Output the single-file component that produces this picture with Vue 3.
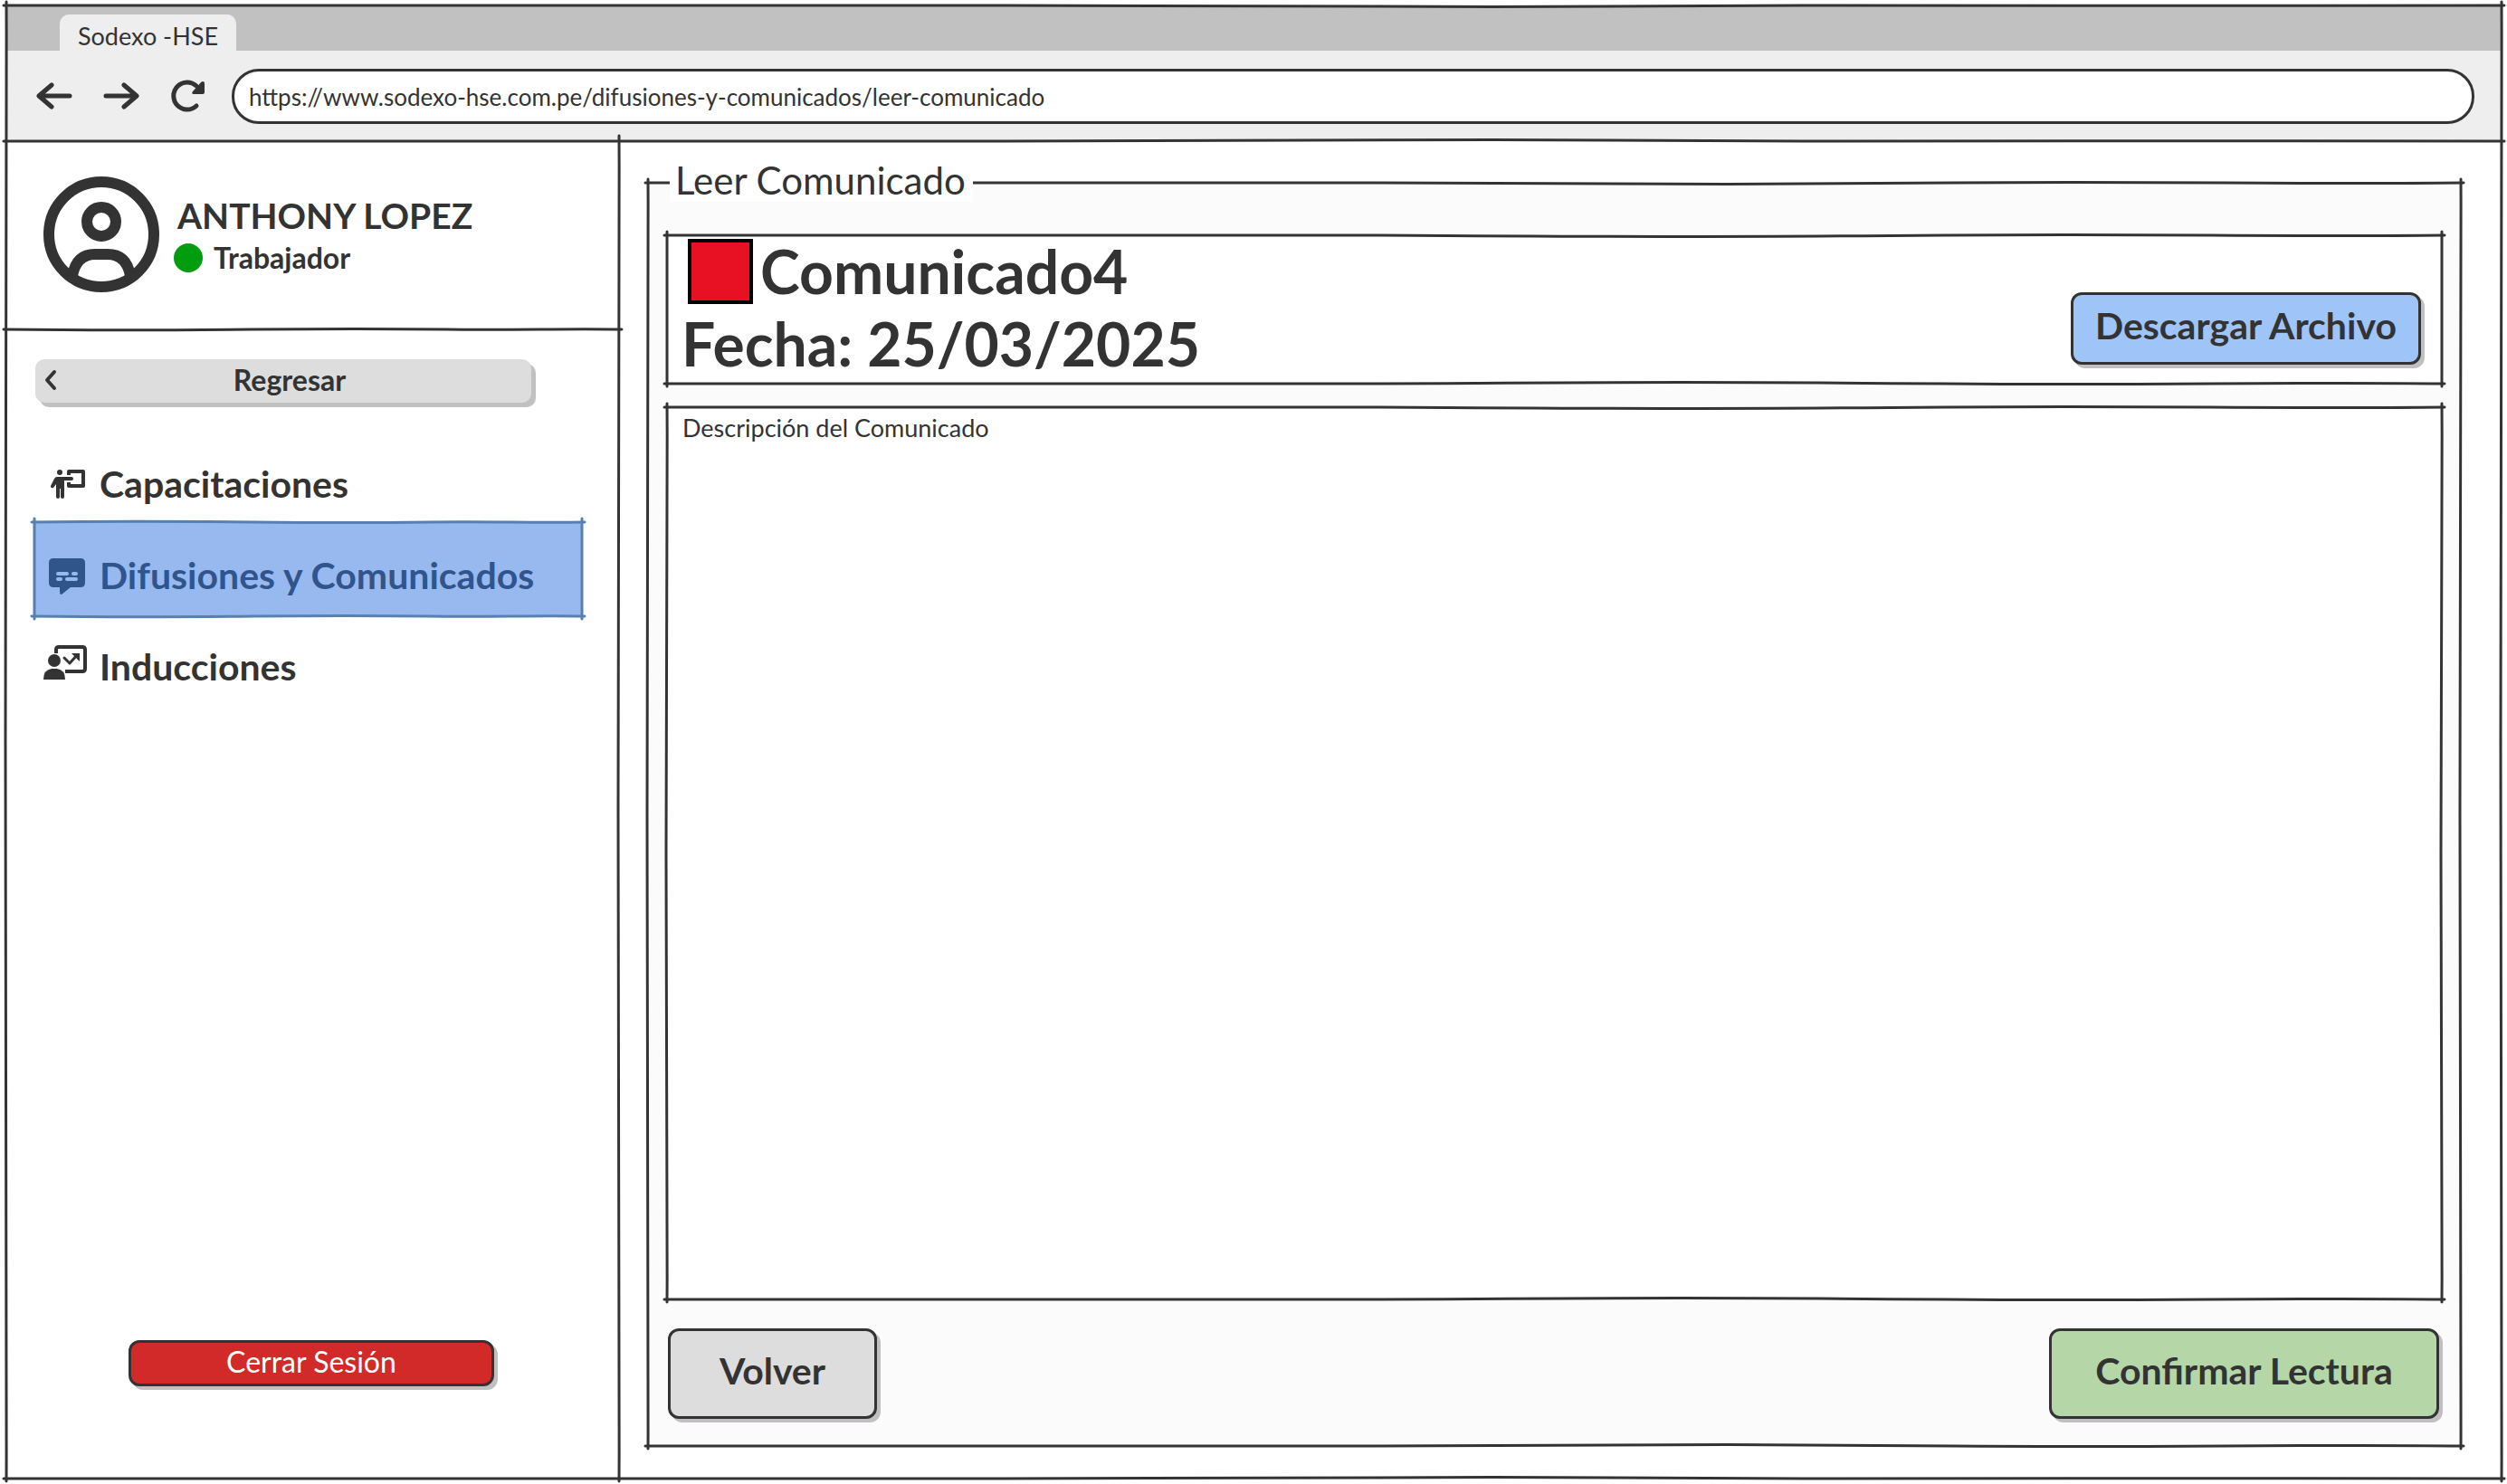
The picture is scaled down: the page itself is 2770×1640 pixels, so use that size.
<script setup>
import { ref, h } from 'vue'

const url = ref('https://www.sodexo-hse.com.pe/difusiones-y-comunicados/leer-comunicado')
const description = ref('Descripción del Comunicado')

const menu = [
  { id: 'training', label: 'Capacitaciones' },
  { id: 'news', label: 'Difusiones y Comunicados', active: true },
  { id: 'induction', label: 'Inducciones' },
]

// Hand-drawn outline stretched over its parent; w and h are the nominal
// proportions, used to keep the wobble and corner overshoot even.
const Sketch = ({ w = 2000, h: tall = 1000, sides = 'trbl' }) => {
  const x = (part, px = 0) => Math.round(part * w + px)
  const y = (part, px = 0) => Math.round(part * tall + px)
  const across = (at, bend, start = -3, end = 3) =>
    `M${x(0, start)} ${y(at)} C${x(0.12)} ${y(at, -bend)} ${x(0.25)} ${y(at, -bend)} ${x(0.4)} ${y(at)} S${x(0.6)} ${y(at, bend)} ${x(0.72)} ${y(at)} S${x(0.9)} ${y(at, bend)} ${x(1, end)} ${y(at)}`
  const down = (at, bend, start = -4, end = 3) =>
    `M${x(at)} ${y(0, start)} C${x(at, bend)} ${y(0.15)} ${x(at, -bend)} ${y(0.3)} ${x(at, -bend)} ${y(0.5)} S${x(at, bend)} ${y(0.85)} ${x(at)} ${y(1, end)}`
  const wave = w > 800 ? 2 : 1
  const sway = tall > 600 ? 1 : 0
  const paths = {
    t: across(0, wave),
    r: down(1, sway),
    b: across(1, -wave),
    l: down(0, sway),
  }
  return h(
    'svg',
    { class: 'sketch', viewBox: `0 0 ${w} ${tall}`, preserveAspectRatio: 'none', 'aria-hidden': 'true' },
    [...sides].map((side) => h('path', { d: paths[side], 'vector-effect': 'non-scaling-stroke' })),
  )
}
Sketch.props = ['w', 'h', 'sides']
</script>

<template>
  <div class="screen">
    <div class="browser">
      <header class="chrome">
        <div class="tabs"><span class="tab">Sodexo -HSE</span></div>
        <div class="toolbar">
          <nav class="nav" aria-label="Navegador">
            <button class="bare" type="button" aria-label="Atrás">
              <svg class="nav-icon" viewBox="0 0 40 40"><path class="line" d="M37 20H4M17 8L3 20L17 32" /></svg>
            </button>
            <button class="bare" type="button" aria-label="Adelante">
              <svg class="nav-icon" viewBox="0 0 40 40"><path class="line" d="M3 20H36M23 8L37 20L23 32" /></svg>
            </button>
            <button class="bare" type="button" aria-label="Recargar">
              <svg class="nav-icon" viewBox="0 0 40 40">
                <path class="line" d="M29 31A15 15 0 1 1 29 9" />
                <path d="M36 4Q38 4 38 6V16Q38 18 36 18H26Q23 18 25 15L34 5Q35 4 36 4Z" />
              </svg>
            </button>
          </nav>
          <input v-model="url" class="address" type="text" aria-label="Dirección" />
        </div>
        <Sketch :w="2757" :h="147" sides="b" />
      </header>

      <div class="body">
        <aside class="sidebar">
          <div class="profile">
            <svg class="avatar" viewBox="0 0 128 128" aria-hidden="true">
              <circle class="ring" cx="64" cy="64" r="58" />
              <circle class="ring" cx="64" cy="50" r="16" />
              <path class="ring" d="M32 110Q36 86 57 86H71Q92 86 96 110" />
            </svg>
            <div class="person">
              <strong class="name">ANTHONY LOPEZ</strong>
              <span class="role"><i class="status"></i>Trabajador</span>
            </div>
            <Sketch :w="677" :h="210" sides="b" />
          </div>

          <button class="back" type="button">
            <svg class="chevron" viewBox="0 0 14 24" aria-hidden="true"><path class="line" d="M11 3L3 12L11 21" /></svg>
            <span class="back-label">Regresar</span>
          </button>

          <nav class="menu" aria-label="Secciones">
            <a v-for="item in menu" :key="item.id" href="#" class="item" :class="{ active: item.active }">
              <Sketch v-if="item.active" :w="605" :h="104" />
              <svg v-if="item.id === 'training'" class="item-icon" viewBox="0 0 48 48" aria-hidden="true">
                <circle cx="18" cy="11" r="3" />
                <path d="M15 16H31Q33 16 33 18T31 20H23V38Q23 40 21 40T19 38V29H18V38Q18 40 16 40T14 38V24L11 28Q9 29 8 27V26L12 18Q13 16 15 16Z" />
                <path class="board" d="M28 14V10H44V26H28V22" />
              </svg>
              <svg v-else-if="item.id === 'news'" class="item-icon" viewBox="0 0 48 48" aria-hidden="true">
                <path d="M11 5H41Q46 5 46 10V32Q46 37 41 37H30L20 45Q18 45 18 43V37H11Q6 37 6 32V10Q6 5 11 5Z" />
                <path class="dash" d="M16 22H26M33 22H36M16 28H19M26 28H36" />
              </svg>
              <svg v-else class="item-icon" viewBox="0 0 48 48" aria-hidden="true">
                <path class="frame" d="M14 9V5Q14 2 17 2H43Q46 2 46 5V26Q46 29 43 29H24" />
                <circle cx="12" cy="17" r="7" />
                <path d="M0 38Q0 27 9 26H15Q24 27 24 38Z" />
                <path class="trend" d="M23 14L29 20L37 11" />
                <path d="M31 9H40V18Z" />
              </svg>
              <span class="item-label">{{ item.label }}</span>
            </a>
          </nav>

          <button class="button logout" type="button">Cerrar Sesión</button>
          <Sketch :w="677" :h="1481" sides="r" />
        </aside>

        <main class="main">
          <fieldset class="panel">
            <Sketch :w="2003" :h="1396" />
            <legend class="title">Leer Comunicado</legend>
            <section class="summary">
              <Sketch :w="1962" :h="164" />
              <div class="facts">
                <h1 class="heading"><i class="swatch"></i>Comunicado4</h1>
                <p class="heading">Fecha: 25/03/2025</p>
              </div>
              <button class="button download" type="button">Descargar Archivo</button>
            </section>
            <div class="note">
              <Sketch :w="1962" :h="986" />
              <textarea v-model="description" class="text" readonly aria-label="Descripción"></textarea>
            </div>
            <div class="actions">
              <button class="button volver" type="button">Volver</button>
              <button class="button confirm" type="button">Confirmar Lectura</button>
            </div>
          </fieldset>
        </main>
      </div>
      <Sketch :w="2757" :h="1628" />
    </div>
  </div>
</template>

<style>
body {
  margin: 0;
  background: #fff;
}
</style>

<style scoped>
.screen,
.screen * {
  box-sizing: border-box;
}
.screen {
  display: flex;
  min-height: 100vh;
  padding: 6px 6px 6px 7px;
  font-family: Lato, "Open Sans", sans-serif;
  font-size: 27px;
  line-height: 32px;
  color: #333;
}
button,
input,
textarea {
  margin: 0;
  font: inherit;
  color: inherit;
}
button {
  cursor: pointer;
}
svg {
  display: block;
  flex: none;
  fill: currentColor;
}
.line,
.ring,
.board,
.dash,
.frame,
.trend {
  fill: none;
  stroke: currentColor;
  stroke-width: 5;
  stroke-linecap: round;
  stroke-linejoin: round;
}
.sketch {
  position: absolute;
  inset: 0;
  width: 100%;
  height: 100%;
  overflow: visible;
  fill: none;
  stroke: #333;
  stroke-width: 3;
  stroke-linecap: round;
  pointer-events: none;
}
.browser {
  position: relative;
  flex: 1;
  display: flex;
  flex-direction: column;
  min-width: 0;
}
.chrome {
  position: relative;
  background: #eee;
}
.tabs {
  display: flex;
  align-items: flex-end;
  height: 50px;
  padding-left: 59px;
  background: #c1c1c1;
}
.tab {
  width: 195px;
  padding-top: 8px;
  border-radius: 10px 10px 0 0;
  background: #eee;
  text-align: center;
}
.toolbar {
  display: flex;
  align-items: center;
  gap: 28px;
  height: 100px;
  padding: 0 30px 0 33px;
}
.nav {
  display: flex;
  gap: 34px;
}
.bare {
  padding: 0;
  border: 0;
  background: none;
}
.nav-icon {
  width: 40px;
  height: 40px;
}
.address {
  flex: 1;
  min-width: 0;
  height: 61px;
  padding: 2px 16px 0;
  border: 3px solid #333;
  border-radius: 30px;
  background: #fff;
  font-size: 26px;
}
.body {
  flex: 1;
  display: flex;
  margin-top: -2px;
}
.sidebar {
  position: relative;
  flex: none;
  display: flex;
  flex-direction: column;
  width: 677px;
}
.profile {
  position: relative;
  display: flex;
  align-items: center;
  gap: 16px;
  height: 210px;
  padding-left: 41px;
}
.avatar {
  width: 128px;
  height: 128px;
}
.ring {
  stroke-width: 12;
  stroke-linecap: butt;
}
.person {
  display: flex;
  flex-direction: column;
  gap: 7px;
  padding: 0 0 4px 4px;
}
.name {
  font-size: 39px;
  line-height: 48px;
}
.role {
  display: flex;
  align-items: center;
  gap: 12px;
  margin-left: -4px;
  font-size: 32px;
  font-weight: 700;
}
.status {
  width: 32px;
  height: 32px;
  border-radius: 50%;
  background: #009e0f;
}
.back {
  display: flex;
  align-items: center;
  width: 548px;
  height: 48px;
  margin: 33px 0 0 32px;
  padding: 0 10px 3px;
  border: 0;
  border-radius: 10px;
  background: #ddd;
  box-shadow: 5px 5px 0 #c1c1c1;
  font-size: 32px;
  font-weight: 700;
}
.chevron {
  width: 14px;
  height: 24px;
}
.chevron .line {
  stroke-width: 4;
}
.back-label {
  flex: 1;
}
.menu {
  display: flex;
  flex-direction: column;
  padding: 34px 41px 0 31px;
}
.item {
  position: relative;
  display: flex;
  align-items: center;
  gap: 14px;
  height: 98px;
  padding: 14px 0 0 10px;
  font-size: 41px;
  line-height: 48px;
  font-weight: 700;
  color: inherit;
  text-decoration: none;
}
.item.active {
  height: 104px;
  background: #97b9f0;
  color: #30558c;
}
.active .sketch {
  stroke: #5780b0;
}
.item-icon {
  width: 48px;
  height: 48px;
}
.board {
  stroke-width: 4;
  stroke-linecap: butt;
}
.frame {
  stroke-width: 4;
  stroke-linecap: butt;
}
.trend {
  stroke-width: 3;
}
.dash {
  stroke: #97b9f0;
  stroke-width: 4;
}
.button {
  display: block;
  padding: 0 0 6px;
  border: 3px solid #333;
  border-radius: 12px;
  box-shadow: 4px 4px 0 #c1bfc1;
  font-size: 41px;
  line-height: 48px;
  font-weight: 700;
}
.logout {
  width: 404px;
  height: 51px;
  margin: auto 0 102px 135px;
  padding-bottom: 3px;
  background: #d12a28;
  color: #fff;
  font-size: 32px;
  line-height: 32px;
  font-weight: 400;
}
.main {
  flex: 1;
  display: flex;
  min-width: 0;
  padding: 48px 45px 36px 32px;
}
.panel {
  position: relative;
  flex: 1;
  display: flex;
  flex-direction: column;
  gap: 26px;
  min-width: 0;
  margin: 0;
  padding: 58px 21px 30px;
  border: 0;
  background: #fbfbfb;
}
.title {
  position: absolute;
  top: -27px;
  left: 24px;
  padding: 0 8px 0 6px;
  background: #fff;
  font-size: 42px;
  line-height: 48px;
}
.summary {
  position: relative;
  display: flex;
  align-items: flex-end;
  justify-content: space-between;
  height: 164px;
  padding: 0 23px 21px 16px;
  background: #fff;
}
.facts {
  align-self: flex-start;
}
.heading {
  display: flex;
  align-items: center;
  gap: 8px;
  height: 80px;
  margin: 0;
  font-size: 66px;
  line-height: 80px;
  font-weight: 700;
}
.swatch {
  width: 72px;
  height: 72px;
  margin-left: 7px;
  border: 4px solid #000;
  background: #e81123;
}
.download {
  width: 387px;
  height: 80px;
  background: #9fc4f8;
}
.note {
  position: relative;
  flex: 1;
  display: flex;
  background: #fff;
}
.text {
  position: relative;
  flex: 1;
  margin: 3px;
  padding: 4px 14px;
  border: 0;
  outline: 0;
  resize: none;
  background: none;
}
.actions {
  display: flex;
  justify-content: space-between;
  padding: 6px 3px 0 1px;
}
.volver {
  width: 231px;
  height: 100px;
  background: #ddd;
}
.confirm {
  width: 431px;
  height: 100px;
  background: #b5d7a8;
}
</style>
